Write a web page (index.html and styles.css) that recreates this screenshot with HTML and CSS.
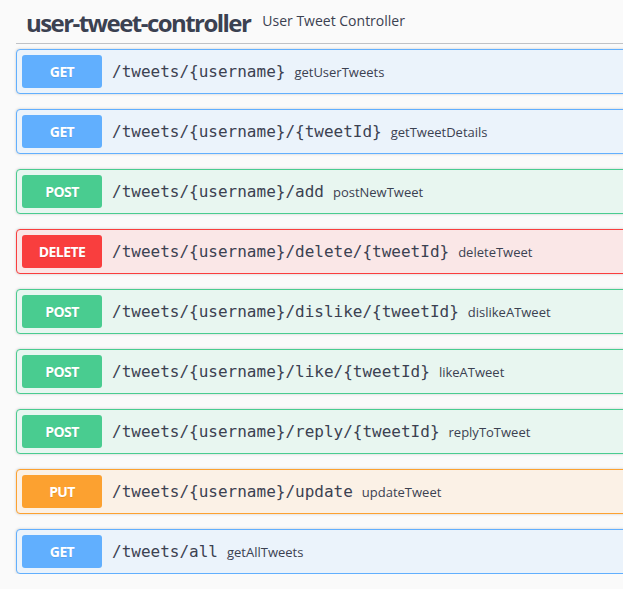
FILE: index.html
```html
<!DOCTYPE html>
<html lang="en">
<head>
<meta charset="utf-8">
<title>user-tweet-controller</title>
<link rel="stylesheet" href="styles.css">
</head>
<body>
<div class="section">
  <h4 class="tag">
    <span class="tag-name">user-tweet-controller</span>
    <small class="tag-desc">User Tweet Controller</small>
  </h4>
  <div class="ops">
    <div class="op get">
      <span class="method">GET</span>
      <span class="path">/tweets/{username}</span>
      <span class="desc">getUserTweets</span>
    </div>
    <div class="op get">
      <span class="method">GET</span>
      <span class="path">/tweets/{username}/{tweetId}</span>
      <span class="desc">getTweetDetails</span>
    </div>
    <div class="op post">
      <span class="method">POST</span>
      <span class="path">/tweets/{username}/add</span>
      <span class="desc">postNewTweet</span>
    </div>
    <div class="op delete">
      <span class="method">DELETE</span>
      <span class="path">/tweets/{username}/delete/{tweetId}</span>
      <span class="desc">deleteTweet</span>
    </div>
    <div class="op post">
      <span class="method">POST</span>
      <span class="path">/tweets/{username}/dislike/{tweetId}</span>
      <span class="desc">dislikeATweet</span>
    </div>
    <div class="op post">
      <span class="method">POST</span>
      <span class="path">/tweets/{username}/like/{tweetId}</span>
      <span class="desc">likeATweet</span>
    </div>
    <div class="op post">
      <span class="method">POST</span>
      <span class="path">/tweets/{username}/reply/{tweetId}</span>
      <span class="desc">replyToTweet</span>
    </div>
    <div class="op put">
      <span class="method">PUT</span>
      <span class="path">/tweets/{username}/update</span>
      <span class="desc">updateTweet</span>
    </div>
    <div class="op get">
      <span class="method">GET</span>
      <span class="path">/tweets/all</span>
      <span class="desc">getAllTweets</span>
    </div>
  </div>
</div>
</body>
</html>
```

FILE: styles.css
```css
html, body {
  margin: 0;
  padding: 0;
  background: #fafafa;
  overflow: hidden;
}

body {
  font-family: "Open Sans", sans-serif;
  color: #3b4151;
}

.section {
  width: 700px;
  padding-left: 16px;
}

.tag {
  display: flex;
  align-items: center;
  height: 44px;
  box-sizing: border-box;
  margin: 0 0 5px;
  padding: 0 20px 0 10px;
  border-bottom: 1px solid rgba(59, 65, 81, 0.3);
}

.tag-name {
  font-size: 24px;
  font-weight: 700;
  letter-spacing: -1.55px;
  line-height: 30px;
  position: relative;
  top: 1px;
}

.tag-desc {
  font-size: 14px;
  font-weight: 400;
  padding: 0 10px 0 12px;
  position: relative;
  top: -1px;
}

.ops {
  display: flex;
  flex-direction: column;
  gap: 15px;
}

.op {
  display: flex;
  align-items: center;
  padding: 5px;
  border: 1px solid;
  border-radius: 4px;
  box-shadow: 0 0 3px rgba(0, 0, 0, 0.19);
}

.method {
  min-width: 80px;
  box-sizing: border-box;
  height: 33px;
  display: flex;
  align-items: center;
  justify-content: center;
  border-radius: 3px;
  color: #fff;
  font-size: 14px;
  font-weight: 700;
  letter-spacing: -0.6px;
  text-shadow: 0 1px 0 rgba(0, 0, 0, 0.1);
}

.path {
  font-family: "DejaVu Sans Mono", monospace;
  font-size: 16px;
  font-weight: 400;
  padding: 0 10px;
  color: #3b4151;
}

.desc {
  font-size: 13px;
  color: #3b4151;
  margin-left: -1px;
}

.get { background: #ebf3fb; border-color: #61affe; }
.get .method { background: #61affe; }

.post { background: #e8f6f0; border-color: #49cc90; }
.post .method { background: #49cc90; }

.delete { background: #fae7e7; border-color: #f93e3e; }
.delete .method { background: #f93e3e; }

.put { background: #fbf1e6; border-color: #fca130; }
.put .method { background: #fca130; }
```
